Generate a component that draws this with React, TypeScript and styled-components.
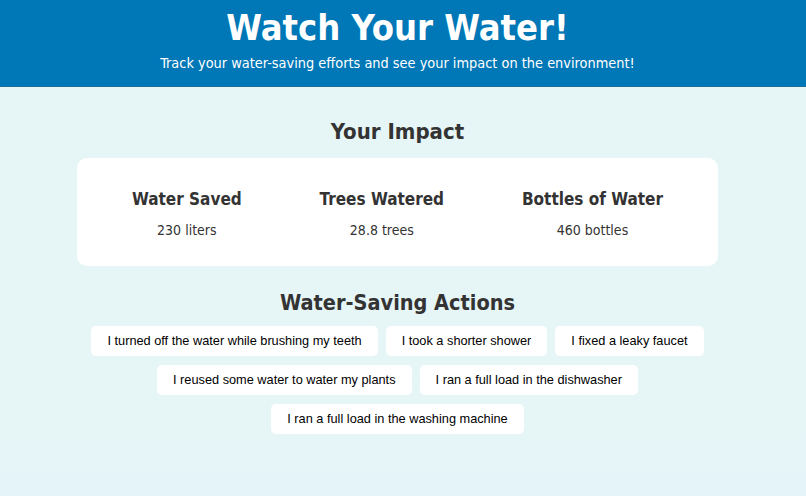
import React from "react";
import styled, { createGlobalStyle } from "styled-components";

const GlobalStyle = createGlobalStyle`
  html, body {
    margin: 0;
    padding: 0;
  }
  body {
    font-family: "DejaVu Sans Condensed", "DejaVu Sans", Verdana, sans-serif;
    font-stretch: condensed;
    color: #333;
    background: linear-gradient(#e6f5f6 0%, #e6f5f6 88%, #e5f4fa 100%);
    min-height: 496px;
  }
`;

const Page = styled.div`
  padding-right: 11px;
`;

const Header = styled.header`
  background-color: #0077b6;
  color: #fff;
  text-align: center;
  padding: 8px 11px 0 0;
  height: 78px;
  box-sizing: content-box;
  border-bottom: 1px solid #1b6e9d;
  margin-right: -11px;
`;

const Title = styled.h1`
  margin: 0;
  font-size: 36px;
  font-weight: bold;
  line-height: 40px;
`;

const Subtitle = styled.p`
  margin: 7px 0 0;
  font-size: 14.4px;
  line-height: 17px;
`;

const Main = styled.main`
  width: 641px;
  margin: 0 auto;
  display: flex;
  flex-direction: column;
  align-items: center;
`;

const SectionTitle = styled.h2<{ $top: number; $size?: number }>`
  margin: ${(p) => p.$top}px 0 0;
  font-size: ${(p) => p.$size ?? 22}px;
  line-height: 28px;
  font-weight: bold;
  color: #333;
  text-align: center;
`;

const StatsCard = styled.div`
  box-sizing: border-box;
  width: 100%;
  margin-top: 12px;
  height: 108px;
  background: #fff;
  border-radius: 10px;
  padding: 0 16px;
  display: flex;
  justify-content: space-around;
  align-items: flex-start;
`;

const Stat = styled.div`
  text-align: center;
  padding-top: 30px;
`;

const StatLabel = styled.h3`
  margin: 0;
  font-size: 17px;
  line-height: 22px;
  font-weight: bold;
  color: #333;
`;

const StatValue = styled.p`
  margin: 10px 0 0;
  font-size: 14px;
  line-height: 20px;
  color: #333;
`;

const Actions = styled.div`
  margin-top: 4.5px;
  width: 100%;
  display: flex;
  flex-wrap: wrap;
  justify-content: center;
`;

const ActionButton = styled.button`
  margin: 4.5px 4px;
  padding: 8px 16px;
  border: none;
  border-radius: 5px;
  background: #fff;
  color: #000;
  font-family: "Liberation Sans", Arial, sans-serif;
  font-size: 12.75px;
  line-height: 14px;
  cursor: pointer;
`;

const stats = [
  { label: "Water Saved", value: "230 liters" },
  { label: "Trees Watered", value: "28.8 trees" },
  { label: "Bottles of Water", value: "460 bottles" },
];

const actions = [
  "I turned off the water while brushing my teeth",
  "I took a shorter shower",
  "I fixed a leaky faucet",
  "I reused some water to water my plants",
  "I ran a full load in the dishwasher",
  "I ran a full load in the washing machine",
];

export default function App() {
  return (
    <Page>
      <GlobalStyle />
      <Header>
        <Title>Watch Your Water!</Title>
        <Subtitle>Track your water-saving efforts and see your impact on the environment!</Subtitle>
      </Header>
      <Main>
        <SectionTitle $top={31}>Your Impact</SectionTitle>
        <StatsCard>
          {stats.map((s) => (
            <Stat key={s.label}>
              <StatLabel>{s.label}</StatLabel>
              <StatValue>{s.value}</StatValue>
            </Stat>
          ))}
        </StatsCard>
        <SectionTitle $top={23} $size={21.5}>Water-Saving Actions</SectionTitle>
        <Actions>
          {actions.map((a) => (
            <ActionButton key={a}>{a}</ActionButton>
          ))}
        </Actions>
      </Main>
    </Page>
  );
}
